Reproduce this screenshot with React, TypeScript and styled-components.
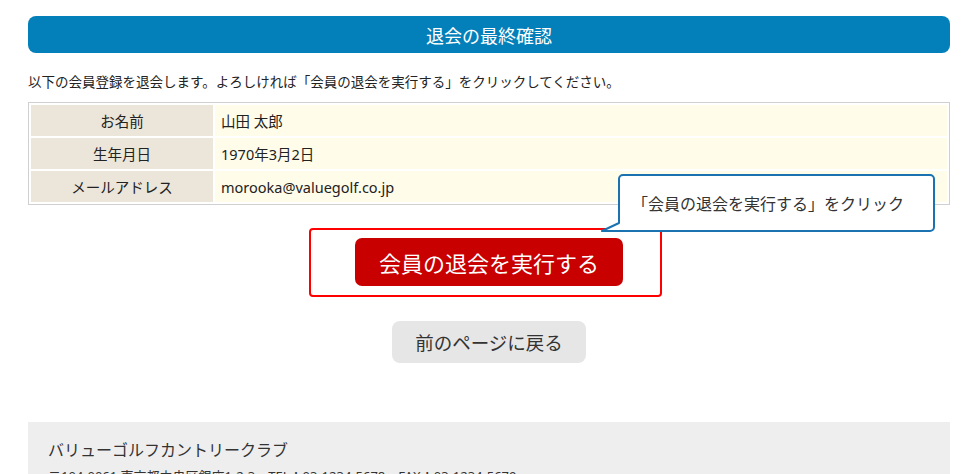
import React from 'react';
import styled, { createGlobalStyle } from 'styled-components';

const GlobalStyle = createGlobalStyle`
  body {
    margin: 0;
    background: #fff;
    color: #333;
    font-family: "Noto Sans", "Noto Sans CJK JP", sans-serif;
  }
`;

const Page = styled.div`
  width: 922px;
  padding: 16px 28px 0;
`;

const TitleBar = styled.h2`
  margin: 0;
  height: 37px;
  border-radius: 8px;
  background: #037fb9;
  color: #fff;
  font-size: 18px;
  font-weight: normal;
  display: flex;
  align-items: center;
  justify-content: center;
`;

const Lead = styled.p`
  margin: 18px 0 9px;
  font-size: 13.5px;
  color: #222;
  line-height: 22px;
`;

const Body = styled.div`
  position: relative;
`;

const InfoTable = styled.table`
  width: 100%;
  border: 1px solid #d0d0d0;
  border-spacing: 2px;
  font-size: 14.5px;
  color: #222;
`;

const Label = styled.th`
  width: 182px;
  height: 31px;
  padding: 0;
  background: #ebe5da;
  font-weight: normal;
  text-align: center;
`;

const Value = styled.td`
  padding: 0 6px;
  background: #fffcea;
`;

const Balloon = styled.div`
  position: absolute;
  left: 590px;
  top: 72px;
  width: 301px;
  height: 54px;
  padding: 0 0 0 12px;
  border: 2px solid #1a72b0;
  border-radius: 5px;
  border-bottom-left-radius: 0;
  background: #fff;
  display: flex;
  align-items: center;
  font-size: 16px;
  color: #333;
  z-index: 2;
`;

const Tail = styled.svg`
  position: absolute;
  left: -19px;
  bottom: -2px;
`;

const Actions = styled.div`
  display: flex;
  flex-direction: column;
  align-items: center;
  margin-top: 23px;
`;

const Highlight = styled.div`
  margin-right: 7px;
  padding: 8px 37px 9px 44px;
  border: 2px solid #f00;
  border-radius: 4px;
`;

const WithdrawButton = styled.button`
  width: 268px;
  height: 48px;
  border: none;
  border-radius: 7px;
  background: #c80000;
  color: #fff;
  font-family: inherit;
  font-size: 22px;
  cursor: pointer;
`;

const BackButton = styled.button`
  margin-top: 24px;
  width: 194px;
  height: 42px;
  border: none;
  border-radius: 8px;
  background: #e6e6e6;
  color: #333;
  font-family: inherit;
  font-size: 18.5px;
  cursor: pointer;
`;

const Footer = styled.footer`
  margin-top: 59px;
  padding: 16px 20px;
  background: #eeeeee;
  color: #333;
`;

const ClubName = styled.p`
  margin: 0;
  font-size: 16px;
  line-height: 24px;
`;

const Address = styled.p`
  margin: 4px 0 0;
  font-size: 13px;
  line-height: 20px;
`;

const rows = [
  { label: 'お名前', value: '山田 太郎' },
  { label: '生年月日', value: '1970年3月2日' },
  { label: 'メールアドレス', value: 'morooka@valuegolf.co.jp' },
];

const App: React.FC = () => {
  return (
    <>
      <GlobalStyle />
      <Page>
        <TitleBar>退会の最終確認</TitleBar>
        <Lead>以下の会員登録を退会します。よろしければ「会員の退会を実行する」をクリックしてください。</Lead>
        <Body>
          <InfoTable>
            <tbody>
              {rows.map((row) => (
                <tr key={row.label}>
                  <Label>{row.label}</Label>
                  <Value>{row.value}</Value>
                </tr>
              ))}
            </tbody>
          </InfoTable>

          <Balloon>
            「会員の退会を実行する」をクリック
            <Tail width="30" height="12" viewBox="0 0 30 12">
              <polygon points="18,0 18,3 1,11 30,11 30,0" fill="#fff" />
              <polyline
                points="18,0 18,3 1,11 30,11"
                fill="none"
                stroke="#1a72b0"
                strokeWidth="2"
                strokeLinejoin="round"
              />
            </Tail>
          </Balloon>

          <Actions>
            <Highlight>
              <WithdrawButton>会員の退会を実行する</WithdrawButton>
            </Highlight>
            <BackButton>前のページに戻る</BackButton>
          </Actions>
        </Body>

        <Footer>
          <ClubName>バリューゴルフカントリークラブ</ClubName>
          <Address>〒104-0061 東京都中央区銀座1-2-3　TEL：03-1234-5678　FAX：03-1234-5679</Address>
        </Footer>
      </Page>
    </>
  );
};

export default App;
